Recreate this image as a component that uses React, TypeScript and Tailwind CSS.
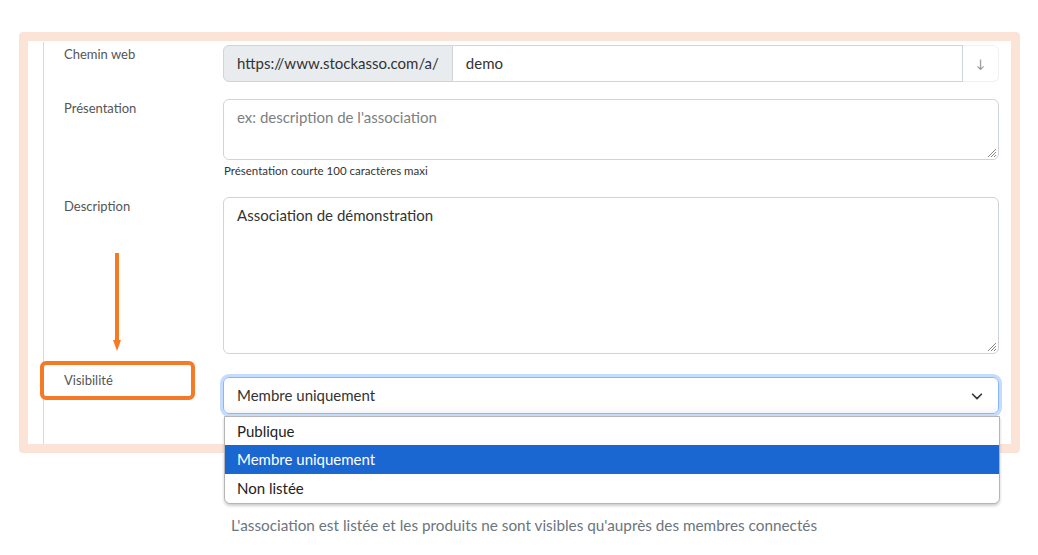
import React from 'react';

export default function App() {
  return (
    <div className="relative w-[1038px] h-[555px] bg-white overflow-hidden font-['Lato',_sans-serif] text-[#333]">
      {/* Form */}
      <div className="pl-[43px] pt-[42px]">
        <div className="border-l border-[#d9d9d9] h-[402px] pl-[20px] pt-[3px]">
          {/* Chemin web */}
          <div className="flex">
            <label className="w-[159px] text-[13px] leading-[18px] text-[#555]">Chemin web</label>
            <div className="flex w-[776px] h-[37px]">
              <span className="flex items-center px-[13px] bg-[#e9ecef] border border-[#ced4da] rounded-l-[6px] text-[15px] text-[#333]">
                https://www.stockasso.com/a/
              </span>
              <div className="flex-1 flex items-center px-[13px] border-y border-r border-[#ced4da] text-[15px] text-[#333]">demo</div>
              <div className="w-[36px] flex items-center justify-center border border-l-0 border-[#f0f0f0] rounded-r-[6px] text-[12px] text-[#888]">
                ↓
              </div>
            </div>
          </div>

          {/* Présentation */}
          <div className="flex mt-[17px]">
            <label className="w-[159px] text-[13px] leading-[18px] text-[#555]">Présentation</label>
            <div className="w-[776px]">
              <div className="relative h-[61px] border border-[#ced4da] rounded-[6px] px-[13px] pt-[6px] text-[15px] text-[#7b7f84]">
                ex: description de l'association
                <Resize />
              </div>
              <p className="mt-[3px] ml-[1px] text-[11.5px] leading-[16px] text-[#333]">Présentation courte 100 caractères maxi</p>
            </div>
          </div>

          {/* Description */}
          <div className="flex mt-[18px]">
            <label className="w-[159px] text-[13px] leading-[18px] text-[#555]">Description</label>
            <div className="relative w-[776px] h-[157px] border border-[#ced4da] rounded-[6px] px-[13px] pt-[6px] text-[15px] text-[#333]">
              Association de démonstration
              <Resize />
            </div>
          </div>

          {/* Visibilité */}
          <div className="flex mt-[17px]">
            <label className="w-[159px] text-[13px] leading-[18px] text-[#555]">Visibilité</label>
            <div className="w-[776px] pt-[6px]">
              <div className="relative flex items-center justify-between h-[37px] border border-[#86b7fe] rounded-[6px] shadow-[0_0_0_3px_#c6dcfd,inset_0_-6px_6px_-4px_rgba(0,0,0,0.06)] px-[13px] text-[15px] text-[#333]">
                Membre uniquement
                <svg className="w-[14px] h-[14px] mr-[1px]" viewBox="0 0 16 16" fill="none" stroke="#343a40" strokeWidth="2" strokeLinecap="round" strokeLinejoin="round">
                  <path d="M3 6l5 5 5-5" />
                </svg>
              </div>
              <p className="mt-[100px] ml-[8px] text-[15.3px] text-[#6c757d]">
                L'association est listée et les produits ne sont visibles qu'auprès des membres connectés
              </p>
            </div>
          </div>
        </div>
      </div>

      {/* Salmon highlight frame */}
      <div className="absolute left-[19px] top-[32px] w-[1001px] h-[421px] border-[9px] border-[#fce3d7] rounded-[4px]" />

      {/* Open dropdown list */}
      <div className="absolute left-[224px] top-[416px] w-[776px] bg-white border border-[#b5b5b5] rounded-b-[6px] shadow-[0_2px_3px_rgba(0,0,0,0.2)] text-[15px] text-[#222] overflow-hidden">
        <div className="h-[28px] flex items-center px-[12px]">Publique</div>
        <div className="h-[29px] flex items-center px-[12px] bg-[#1a67d2] text-white">Membre uniquement</div>
        <div className="h-[29px] flex items-center px-[12px]">Non listée</div>
      </div>

      {/* Orange annotation */}
      <svg className="absolute left-[108px] top-[252px]" width="18" height="100" viewBox="0 0 18 100">
        <rect x="7" y="1" width="4" height="89" fill="#f47a26" />
        <path d="M5 88 L13 88 L9 99 Z" fill="#f47a26" />
      </svg>
      <div className="absolute left-[40px] top-[361px] w-[155px] h-[39px] border-4 border-[#f47a26] rounded-[6px]" />
    </div>
  );
}

const Resize = () => (
  <svg className="absolute right-[2px] bottom-[2px]" width="9" height="9" viewBox="0 0 9 9" stroke="#888" strokeWidth="1">
    <path d="M1 9 L9 1 M4 9 L9 4 M7 9 L9 7" />
  </svg>
);
